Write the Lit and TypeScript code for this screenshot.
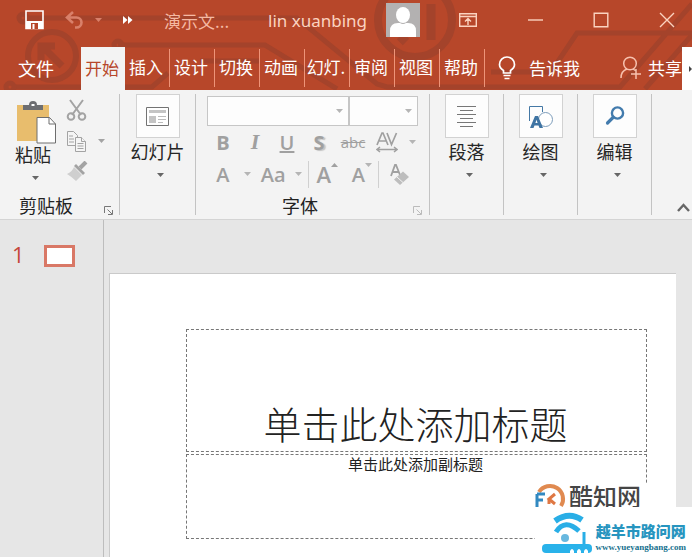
import { LitElement, html, css, svg } from "lit";
import { customElement, property, state } from "lit/decorators.js";
import { classMap } from "lit/directives/class-map.js";

const caret = html`<svg class="caret" width="7" height="4" viewBox="0 0 7 4" aria-hidden="true"><path d="M0 0h7L3.5 4z" fill="currentColor"/></svg>`;
const launcher = html`<svg width="9" height="9" viewBox="0 0 9 9" aria-hidden="true"><path d="M.5 7V.5H7M3.5 3.5 8 8M8.500 4v4.500H4" fill="none" stroke="currentColor"/></svg>`;

const buttonReset = css`
  * { box-sizing: border-box; }
  button {
    appearance: none;
    background: none;
    border: 0;
    margin: 0;
    padding: 0;
    color: inherit;
    font: inherit;
    display: flex;
    align-items: center;
    justify-content: center;
    cursor: pointer;
  }
  svg { display: block; flex: none; }
`;

@customElement("title-bar")
class TitleBar extends LitElement {
  static styles = [buttonReset, css`
    :host { display: flex; align-items: center; height: 40px; padding: 0 17px 0 25px; color: #fbd3c0; font-size: 17px; }
    .save { color: #fff; margin-right: 21px; }
    .undo { color: #d9806a; gap: 10px; margin-right: 21px; }
    .more { color: #fff; margin-right: 31px; }
    .doc { width: 74px; margin-right: 30px; color: #f5b9a3; white-space: nowrap; }
    .user { gap: 16px; white-space: nowrap; }
    .name { width: 102px; text-align: left; font-family: "Noto Sans", "Open Sans", sans-serif; font-size: 17px; }
    .window { display: flex; gap: 50px; margin-left: auto; }
  `];
  render() {
    return html`
      <button class="save" aria-label="保存"><svg width="19" height="20" viewBox="0 0 19 20"><path d="M1 1h17v17.500H1z" fill="none" stroke="currentColor" stroke-width="1.600"/><path d="M1 11h17v8H1z" fill="currentColor"/><path d="M6 13h7v6H6z" fill="#b7472a"/><path d="M7.500 14h2v5h-2z" fill="currentColor"/></svg></button>
      <button class="undo" aria-label="撤消"><svg width="20" height="18" viewBox="0 0 20 18"><path d="M8 1 2 6.500 8 12M2 6.500h9.500a5 5 0 0 1 0 10H10" fill="none" stroke="currentColor" stroke-width="2.600"/></svg>${caret}</button>
      <button class="more" aria-label="更多"><svg width="10" height="8" viewBox="0 0 10 8"><path d="M0 0l4.500 4L0 8zM5 0l4.500 4L5 8z" fill="currentColor"/></svg></button>
      <span class="doc">演示文...</span>
      <button class="user"><span class="name">lin xuanbing</span>
        <svg width="34" height="34" viewBox="0 0 34 34"><path d="M0 0h34v34H0z" fill="#b3b1b1"/><ellipse cx="17" cy="12" rx="7" ry="8" fill="#fff"/><path d="M4 34v-6q0-8 8-8h2q3 2 6 0h2q8 0 8 8v6z" fill="#fff"/></svg>
      </button>
      <div class="window">
        <button aria-label="功能区显示选项"><svg width="18" height="14" viewBox="0 0 18 14"><path d="M.7.700h16.600v12.600H.7zM.7 3.500h16.600M9 12V6M6 8.500l3-3 3 3" fill="none" stroke="currentColor" stroke-width="1.400"/></svg></button>
        <button aria-label="最小化"><svg width="16" height="14" viewBox="0 0 16 14"><path d="M1 7h15" stroke="currentColor" stroke-width="1.400"/></svg></button>
        <button aria-label="最大化"><svg width="16" height="16" viewBox="0 0 16 16"><path d="M1.200 1.200h13.600v13.600H1.200z" fill="none" stroke="currentColor" stroke-width="1.400"/></svg></button>
        <button aria-label="关闭"><svg width="16" height="16" viewBox="0 0 16 16"><path d="M1 1l14 14M15 1 1 15" stroke="currentColor" stroke-width="1.400"/></svg></button>
      </div>`;
  }
}

@customElement("tab-strip")
class TabStrip extends LitElement {
  @state() active = "开始";
  private tabs = ["开始", "插入", "设计", "切换", "动画", "幻灯.", "审阅", "视图", "帮助"];
  static styles = [buttonReset, css`
    :host { display: flex; height: 43px; color: #fff; font-size: 17px; line-height: 24px; white-space: nowrap; }
    .file { width: 81px; padding: 0 9px 2px 0; font-size: 18px; }
    .tabs { display: flex; }
    .tab { width: 45px; margin: 2px 0 3px; padding: 0 2px 2px 0; border-right: 1px solid #ee9478; }
    .tab.on { width: 44px; margin: 0; border: 0; background: #f3f3f3; color: #b7472a; }
    .tell { gap: 13px; margin-left: 13px; padding-bottom: 2px; }
    .share { gap: 7px; margin-left: auto; width: 62px; justify-content: flex-start; padding-bottom: 2px; }
    .share svg { color: #f7c1ae; }
    .next { width: 10px; justify-content: flex-end; background: #fff; color: #444; }
  `];
  render() {
    return html`
      <button class="file">文件</button>
      <nav class="tabs">${this.tabs.map(t => html`<button class=${classMap({ tab: true, on: t === this.active })} @click=${() => (this.active = t)}>${t}</button>`)}</nav>
      <button class="tell"><svg width="18" height="24" viewBox="0 0 18 24"><path d="M5.500 17v-2.500Q1.500 12 1.500 8.500a7.300 7.300 0 0 1 15 0q0 3.500-4 6V17z" fill="none" stroke="#fff" stroke-width="1.700"/><path d="M5.500 19.500h7M6.500 22.500h5" stroke="#fff" stroke-width="1.600"/></svg>告诉我</button>
      <button class="share"><svg width="21" height="23" viewBox="0 0 21 23"><circle cx="10" cy="7.500" r="6.300" fill="none" stroke="currentColor" stroke-width="1.500"/><path d="M1 22q0-7 6-9M13 13l3 2M11 18h10M16 13v10" fill="none" stroke="currentColor" stroke-width="1.500"/></svg>共享</button>
      <button class="next" aria-label="更多选项卡"><svg width="3" height="6" viewBox="0 0 3 6"><path d="M0 0l3 3-3 3z" fill="currentColor"/></svg></button>`;
  }
}

@customElement("gallery-group")
class GalleryGroup extends LitElement {
  @property() label = "";
  @property() icon = "";
  static styles = [buttonReset, css`
    :host { display: flex; justify-content: center; border-right: 1px solid #c3c3c3; }
    button { flex-direction: column; justify-content: flex-start; font-size: 18px; line-height: 20px; white-space: nowrap; }
    .tile { display: grid; place-items: center; width: 44px; height: 44px; margin-bottom: 3px; border: 1px solid #d2d2d2; background: #fdfdfd; }
    .caret { margin: 12px 0 0 6px; color: #666; }
  `];
  private glyph() {
    switch (this.icon) {
      case "slides": return svg`<path d="M3.500 5.500h22v18h-22z" fill="#fff" stroke="#737373"/><path d="M6 8h17v3H6zM6 14h7v7H6z" fill="#c4c4c4"/><path d="M15 14.500h8M15 17.500h8M15 20.500h5" stroke="#bbb"/>`;
      case "paragraph": return svg`<path d="M5 4.500h19M8 8.500h13M5 12.500h19M8 16.500h13M5 20.500h19M8 24.500h13" stroke="#777"/>`;
      case "drawing": return svg`<path d="M3.500 19V4.500h13V10" fill="none" stroke="#4478a5"/><circle cx="19.500" cy="17.500" r="7" fill="#fff" stroke="#7d9dbb"/><path d="M4 26 9 14h3l5 12h-3.500l-1-2.500h-4L7.500 26zM9.400 21h2.200l-1.100-3.200z" fill="#3f74a3" fill-rule="evenodd"/>`;
      default: return svg`<circle cx="17.500" cy="11" r="5.600" fill="none" stroke="#427bad" stroke-width="2.400"/><path d="M13 15.500 7.500 21" stroke="#427bad" stroke-width="3.200" stroke-linecap="round"/>`;
    }
  }
  render() {
    return html`<button><span class="tile"><svg width="29" height="29" viewBox="0 0 29 29">${this.glyph()}</svg></span>${this.label}${caret}</button>`;
  }
}

@customElement("clipboard-group")
class ClipboardGroup extends LitElement {
  static styles = [buttonReset, css`
    :host { display: flex; flex-direction: column; justify-content: space-between; border-right: 1px solid #c3c3c3; font-size: 18px; line-height: 20px; padding: 5px 6px 0 15px; }
    .body { display: flex; gap: 8px; }
    .paste { flex-direction: column; width: 43px; align-items: flex-start; }
    .paste .icon { margin: 0 0 0 2px; }
    .paste .caret { margin: 12px 0 0 17px; color: #666; }
    .small { display: flex; flex-direction: column; gap: 9px; color: #a3a3a3; }
    .small button { gap: 11px; justify-content: flex-start; }
    .foot { display: flex; justify-content: space-between; align-items: flex-end; padding-left: 4px; color: #222; }
    .foot button { color: #777; }
  `];
  render() {
    return html`
      <div class="body">
        <button class="paste"><svg class="icon" width="40" height="43" viewBox="0 0 40 43"><path d="M0 4h32v36H0z" fill="#e8bd6d"/><path d="M6 9V4h6q0-4 4-4t4 4h6v5z" fill="#6d6e71"/><path d="M14.500 3h3v2h-3z" fill="#fff"/><path d="M20 16.500h12.500l6 6.500v19H20z" fill="#fff" stroke="#6e6e6e"/><path d="M32 16.500V23h6.500" fill="none" stroke="#6e6e6e"/></svg>粘贴${caret}</button>
        <div class="small">
          <button aria-label="剪切"><svg width="21" height="22" viewBox="0 0 21 22" fill="none" stroke="currentColor" stroke-width="2"><path d="M4 1l11 15M17 1 6 16"/><circle cx="5" cy="17.500" r="3.300"/><circle cx="16" cy="17.500" r="3.300"/></svg></button>
          <button aria-label="复制"><svg width="21" height="22" viewBox="0 0 21 22" fill="#f5f5f5" stroke="currentColor"><path d="M1.500 1.500h6l4 4v10h-10z"/><path d="M9.500 7.500h6l4 4v10h-10z"/><path d="M15.500 7.500v4h4M3 6h4M3 9h5M3 12h5M11.500 13.500h6M11.500 16h6M11.500 18.500h6"/></svg>${caret}</button>
          <button aria-label="格式刷"><svg width="22" height="21" viewBox="0 0 22 21"><path d="M8 6l8 8-6 6q-4-4-9-7 5-2 7-7z" fill="#cfcfcf"/><path d="M8 5l2-2 9 9-2 2z" fill="currentColor"/><path d="M14 7l6-6" stroke="currentColor" stroke-width="4"/></svg></button>
        </div>
      </div>
      <div class="foot">剪贴板<button aria-label="剪贴板设置">${launcher}</button></div>`;
  }
}

@customElement("font-group")
class FontGroup extends LitElement {
  static styles = [buttonReset, css`
    :host { display: flex; flex-direction: column; border-right: 1px solid #c3c3c3; padding: 2px 7px 0 11px; color: #a0a0a0; font-family: "Open Sans", sans-serif; }
    .boxes { display: flex; margin-right: 4px; }
    .box { position: relative; width: 143px; }
    .box.size { width: 69px; }
    select { appearance: none; display: block; width: 100%; height: 30px; border: 1px solid #c6c6c6; background: #fdfdfd; border-radius: 0; }
    .box .caret { position: absolute; right: 6px; top: 13px; color: #b5b5b5; pointer-events: none; }
    .row { display: flex; align-items: center; height: 32px; font-size: 20px; }
    .row button { width: 32px; height: 28px; }
    .row .caret { color: #b5b5b5; }
    .bold { font-weight: 700; }
    .italic { font-style: italic; font-weight: 600; font-family: "Liberation Serif", serif; font-size: 22px; }
    .under { text-decoration: underline; font-weight: 600; }
    .shadow { font-weight: 700; text-shadow: 2px 1px 1px #c4c4c4; }
    .row .strike { width: 36px; font-size: 15px; text-decoration: line-through; }
    .row .narrow { width: 18px; }
    .row .case { width: 34px; }
    .rule { width: 1px; height: 27px; background: #d0d0d0; }
    .row .grow { width: 38px; font-size: 22px; }
    .grow svg, .shrink svg { align-self: flex-start; margin-top: 3px; }
    .semi, .grow, .shrink { font-weight: 600; }
    .row .clear { width: 44px; }
    .foot { display: flex; align-items: flex-end; justify-content: space-between; margin-top: auto; font: 18px/20px "Noto Sans CJK SC", sans-serif; }
    .label { flex: 1; padding-right: 20px; text-align: center; color: #222; }
    .foot button { color: #bbb; }
  `];
  render() {
    return html`
      <div class="boxes">
        <span class="box"><select aria-label="字体"></select>${caret}</span>
        <span class="box size"><select aria-label="字号"></select>${caret}</span>
      </div>
      <div class="row">
        <button class="bold">B</button><button class="italic">I</button><button class="under">U</button><button class="shadow">S</button><button class="strike">abc</button>
        <button aria-label="字符间距"><svg width="22" height="21" viewBox="0 0 22 21" fill="none" stroke="currentColor"><path d="M1 13 6 1h1l5 12M3 9h7M11 1l4.500 11.500L20.500 1" stroke-width="1.700"/><path d="M1 17.500h20M4 15l-3 2.500L4 20M18 15l3 2.500L18 20" stroke-width="1.500"/></svg></button>
        <button class="narrow" aria-label="字符间距选项">${caret}</button>
      </div>
      <div class="row">
        <button class="semi" aria-label="字体颜色">A</button><button class="narrow" aria-label="颜色选项">${caret}</button>
        <button class="case semi">Aa</button><button class="narrow" aria-label="大小写选项">${caret}</button>
        <span class="rule"></span>
        <button class="grow" aria-label="增大字号">A<svg width="7" height="4" viewBox="0 0 7 4"><path d="M0 4h7L3.500 0z" fill="currentColor"/></svg></button>
        <button class="shrink" aria-label="减小字号">A${caret}</button>
        <span class="rule"></span>
        <button class="clear" aria-label="清除格式"><svg width="20" height="21" viewBox="0 0 20 21"><path d="M1 12 5 1h1l4 10M2.500 8H9" fill="none" stroke="currentColor" stroke-width="1.800"/><path d="M4 15.500l9-8 6 5.500-9 8z" fill="#bdbdbd"/><path d="M7 13l6 5.500" stroke="#f3f3f3"/></svg></button>
      </div>
      <div class="foot"><span class="label">字体</span><button aria-label="字体设置">${launcher}</button></div>`;
  }
}

@customElement("ribbon-bar")
class RibbonBar extends LitElement {
  static styles = [buttonReset, css`
    :host { display: flex; height: 130px; padding: 4px 0; background: #f3f3f3; color: #262626; border-bottom: 1px solid #d4d4d4; }
    clipboard-group { width: 120px; flex: none; }
    font-group { width: 234px; flex: none; }
    gallery-group { width: 74px; flex: none; }
    .wide { width: 76px; }
    .end { flex: 1; display: flex; align-items: flex-end; justify-content: flex-end; padding: 0 2px 3px 0; color: #666; }
  `];
  render() {
    return html`
      <clipboard-group></clipboard-group>
      <gallery-group class="wide" label="幻灯片" icon="slides"></gallery-group>
      <font-group></font-group>
      <gallery-group label="段落" icon="paragraph"></gallery-group>
      <gallery-group label="绘图" icon="drawing"></gallery-group>
      <gallery-group label="编辑" icon="find"></gallery-group>
      <div class="end"><button aria-label="折叠功能区"><svg width="13" height="9" viewBox="0 0 13 9"><path d="M1 8l5.500-6L12 8" fill="none" stroke="currentColor" stroke-width="2.400"/></svg></button></div>`;
  }
}

@customElement("site-mark")
class SiteMark extends LitElement {
  static styles = css`
    :host { display: flex; flex-direction: column; align-items: flex-end; }
    .top { display: flex; gap: 4px; height: 24px; margin-right: 42px; padding: 0 9px 0 3px; background: #fff; color: #454545; font-size: 24px; line-height: 26px; font-weight: 500; white-space: nowrap; }
    .bottom { position: relative; display: flex; align-items: flex-start; gap: 3px; height: 50px; padding: 0 6px 0 7px; background: #fff; }
    .badge { flex: none; }
    .words { display: flex; flex-direction: column; align-items: center; padding-top: 14px; }
    .site { color: #2795bf; font-size: 15px; line-height: 20px; font-weight: 900; white-space: nowrap; }
    a { color: #16718e; font: 700 9px/12px "Liberation Serif", serif; text-decoration: none; }
    svg { display: block; flex: none; overflow: visible; }
  `;
  render() {
    return html`
      <div class="top"><svg width="30" height="34" viewBox="0 0 30 34"><path d="M4 9a13 13 0 0 1 22 14" fill="none" stroke="#e08a50" stroke-width="4"/><path d="M2 11v14q2 5 7 7M2 11h8M3 17h5" fill="none" stroke="#3289c1" stroke-width="3"/><path d="M20 11l-6 5 6 5M14 16v5" fill="none" stroke="#df7743" stroke-width="3"/></svg>酷知网</div>
      <div class="bottom">
        <svg class="badge" width="50" height="46" viewBox="1 0 50 46"><path d="M14 14q14-10 27-1" fill="none" stroke="#29aee6" stroke-width="6"/><path d="M15 25q9-14 23-1" fill="none" stroke="#29aee6" stroke-width="5"/><circle cx="24" cy="31" r="4" fill="#68b8df"/><path d="M43 25v14" stroke="#29aee6" stroke-width="3"/><rect x="1" y="37" width="50" height="9" rx="4" fill="#29b2ea"/><path d="M29 46v-2q2-4 4 0v2zM36 46v-2q2-4 4 0v2zM43 46v-2q2-4 4 0v2z" fill="#fff"/></svg>
        <div class="words"><span class="site">越羊市路问网</span><a href="#">www.yueyangbang.com</a></div>
      </div>`;
  }
}

@customElement("app-root")
class AppRoot extends LitElement {
  static styles = css`
    * { box-sizing: border-box; }
    :host { position: relative; display: flex; flex-direction: column; min-height: 100vh; overflow: hidden; background: #e6e6e6; font-family: "Noto Sans CJK SC", sans-serif; }
    header { position: relative; display: flex; flex-direction: column; gap: 7px; height: 90px; overflow: hidden; background: #b7472a; }
    .circuit { position: absolute; left: 0; top: 0; }
    title-bar, tab-strip { position: relative; }
    main { flex: 1; display: flex; }
    aside { display: flex; gap: 22px; align-items: flex-start; width: 104px; padding: 25px 0 0 12px; border-right: 1px solid #bdbdbd; }
    .num { width: 10px; color: #c5473a; font: 22px/18px "Open Sans", sans-serif; }
    .thumb { width: 31px; height: 22px; border: 3px solid #d97866; background: #fff; }
    .stage { flex: 1; display: flex; padding: 53px 16px 0 5px; }
    .slide { flex: 1; padding: 55px 29px 18px 76px; border: 1px solid #cacaca; border-width: 1px 0 0 1px; background: #fff; display: flex; flex-direction: column; gap: 2px; }
    .holder { margin: 0; border: 1px dashed #777; text-align: center; color: #222; font-weight: 400; }
    .title { display: flex; align-items: flex-end; justify-content: center; height: 123px; padding: 0 2px 0 0; font-size: 38px; line-height: 56px; font-weight: 300; white-space: nowrap; }
    .sub { height: 85px; padding-right: 2px; font-size: 15px; line-height: 17px; }
    site-mark { position: absolute; right: 0; bottom: 0; }
  `;
  render() {
    return html`
      <header>
        <svg class="circuit" width="692" height="90" viewBox="0 0 692 90" fill="none" stroke="#a4432b" stroke-width="5" aria-hidden="true">
          <circle cx="23" cy="18" r="4"/><path d="M27 18h270l80 66 10 3h233L692 4M118 45h147l72 44M12 87h140l16-14M200 61h60M645 89l47-54M692 33H577l-26 39h-60"/>
          <circle cx="118" cy="45" r="4"/><circle cx="10" cy="87" r="4"/>
          <circle cx="52" cy="56" r="24" stroke-width="6"/><path d="M62 66 42 46M41 60V46h14" stroke-width="7"/>
          <circle cx="415" cy="20" r="37" stroke-width="8"/><path d="M431 4v36M400 36l6 6" stroke-width="9"/>
        </svg>
        <title-bar></title-bar>
        <tab-strip></tab-strip>
      </header>
      <ribbon-bar></ribbon-bar>
      <main>
        <aside><span class="num">1</span><div class="thumb"></div></aside>
        <section class="stage">
          <article class="slide">
            <h1 class="holder title">单击此处添加标题</h1>
            <p class="holder sub">单击此处添加副标题</p>
          </article>
        </section>
      </main>
      <site-mark></site-mark>`;
  }
}
